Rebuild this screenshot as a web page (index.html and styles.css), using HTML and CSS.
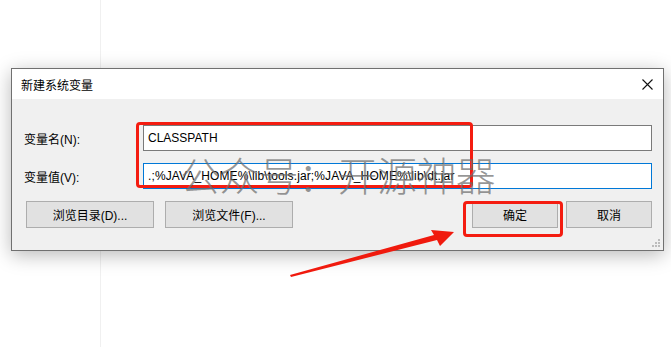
FILE: index.html
```html
<!DOCTYPE html>
<html lang="zh-CN">

<head>
    <meta charset="UTF-8">
    <meta name="viewport" content="width=device-width, initial-scale=1.0">
    <title>新建系统变量</title>
    <link rel="stylesheet" href="styles.css">
</head>

<body>
    <div class="desktop">
        <div class="side-pane"></div>
        <div class="main-pane"></div>
    </div>

    <div class="dialog">
        <div class="title-bar">
            <span class="title">新建系统变量</span>
            <svg class="close" width="11" height="11" viewBox="0 0 11 11">
                <path d="M0.5 0.5 L10.5 10.5 M10.5 0.5 L0.5 10.5" stroke="#111" stroke-width="1.1" fill="none" />
            </svg>
        </div>
        <div class="dialog-body">
            <div class="field">
                <label class="label">变量名(N):</label>
                <div class="input">CLASSPATH</div>
            </div>
            <div class="field">
                <label class="label">变量值(V):</label>
                <div class="input focused">.;%JAVA_HOME%\lib\tools.jar;%JAVA_HOME%\lib\dt.jar</div>
            </div>
            <div class="buttons">
                <button class="btn wide">浏览目录(D)...</button>
                <button class="btn wide">浏览文件(F)...</button>
                <span class="spacer"></span>
                <button class="btn">确定</button>
                <button class="btn">取消</button>
            </div>
        </div>
        <svg class="grip" width="8" height="8" viewBox="0 0 8 8">
            <rect x="6" y="0" width="2" height="2" fill="#bcbcbc" />
            <rect x="3" y="3" width="2" height="2" fill="#bcbcbc" />
            <rect x="6" y="3" width="2" height="2" fill="#bcbcbc" />
            <rect x="0" y="6" width="2" height="2" fill="#bcbcbc" />
            <rect x="3" y="6" width="2" height="2" fill="#bcbcbc" />
            <rect x="6" y="6" width="2" height="2" fill="#bcbcbc" />
        </svg>
    </div>

    <div class="mark mark-fields"></div>
    <div class="mark mark-ok"></div>
    <div class="watermark">公众号：开源神器</div>

    <svg class="arrow" width="671" height="347" viewBox="0 0 671 347">
        <polygon fill="#f01a0e"
            points="290,275 434,235 431,230 454,232 440,246 437,240 291,277" />
    </svg>
</body>

</html>
```

FILE: styles.css
```css
html, body {
    margin: 0;
    padding: 0;
}

body {
    width: 671px;
    height: 347px;
    overflow: hidden;
    background: #fff;
    font-family: "Liberation Sans", "Noto Sans CJK SC", sans-serif;
    font-size: 12px;
    color: #000;
}

.desktop {
    display: flex;
    height: 347px;
}

.side-pane {
    width: 100px;
    border-right: 1px solid #f0f0f0;
}

.main-pane {
    flex: 1;
}

.dialog {
    position: absolute;
    left: 11px;
    top: 68px;
    width: 651px;
    height: 181px;
    border: 1px solid #707070;
    background: #f0f0f0;
    box-shadow: 0 4px 18px rgba(0, 0, 0, 0.28);
    display: flex;
    flex-direction: column;
}

.title-bar {
    height: 30px;
    background: #fff;
    display: flex;
    align-items: center;
    justify-content: space-between;
    padding: 0 10px 0 9px;
}

.title {
    font-family: "Noto Sans CJK SC", sans-serif;
    font-size: 12px;
}

.dialog-body {
    padding: 26px 11px 0 12px;
}

.field {
    display: flex;
    align-items: center;
    margin-bottom: 12px;
}

.label {
    width: 119px;
}

.input {
    flex: 1;
    height: 24px;
    line-height: 24px;
    border: 1px solid #7a7a7a;
    background: #fff;
    padding: 0 4px;
    font-family: "Liberation Sans", sans-serif;
    font-size: 12px;
    white-space: nowrap;
    overflow: hidden;
}

.input.focused {
    border-color: #0078d7;
    letter-spacing: 0.12px;
}

.buttons {
    display: flex;
    align-items: center;
    gap: 11px;
    margin-top: 5px;
    padding-left: 2px;
}

.spacer {
    flex: 1;
}

.btn {
    width: 86px;
    height: 27px;
    border: 1px solid #adadad;
    background: #e1e1e1;
    font-family: "Liberation Sans", "Noto Sans CJK SC", sans-serif;
    font-size: 12px;
    color: #000;
    padding: 0;
}

.btn.wide {
    width: 128px;
}

.buttons .btn:last-child {
    margin-left: -3px;
}

.grip {
    position: absolute;
    right: 3px;
    bottom: 3px;
}

.mark {
    position: absolute;
    border: 3px solid #f41c10;
    border-radius: 4px;
}

.mark-fields {
    left: 136px;
    top: 122px;
    width: 331px;
    height: 60px;
}

.mark-ok {
    left: 463px;
    top: 201px;
    width: 94px;
    height: 30px;
}

.watermark {
    position: absolute;
    left: 180px;
    top: 150px;
    font-family: "Noto Sans CJK SC", sans-serif;
    font-weight: 200;
    font-size: 40px;
    letter-spacing: -0.6px;
    line-height: 48px;
    color: rgba(110, 110, 110, 0.72);
    white-space: nowrap;
}

.arrow {
    position: absolute;
    left: 0;
    top: 0;
}
```
